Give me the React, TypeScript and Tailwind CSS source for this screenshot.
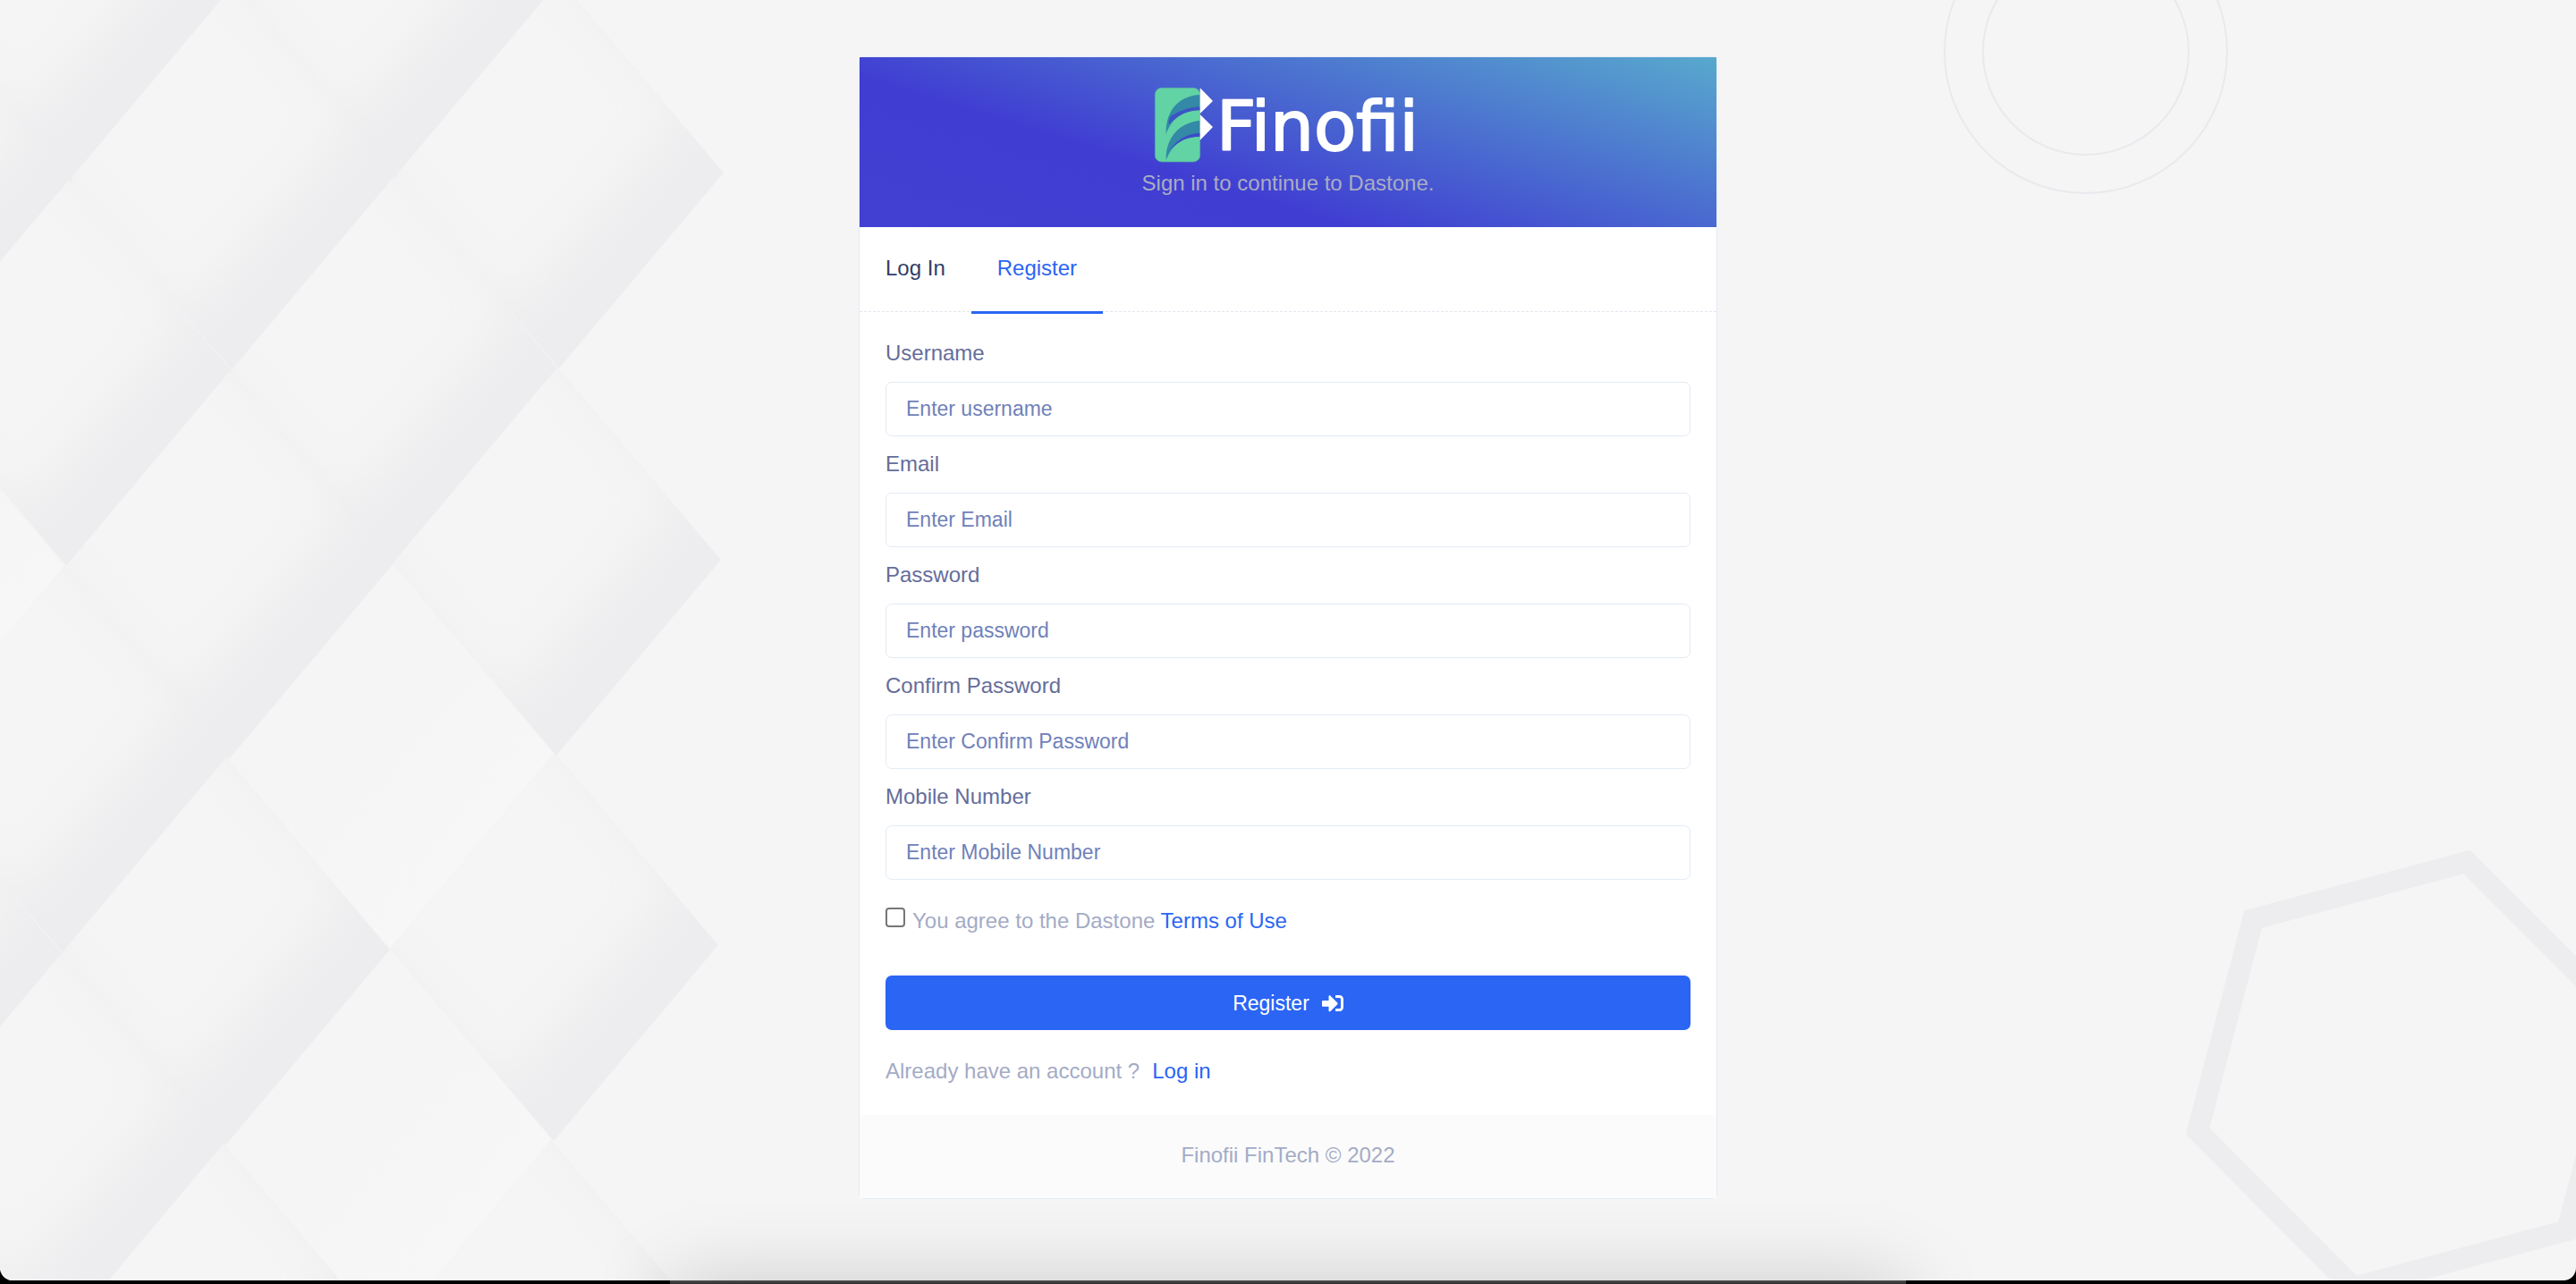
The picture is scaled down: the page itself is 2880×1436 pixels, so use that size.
import React from "react";
import { FaSignInAlt } from "react-icons/fa";

const fields = [
  { id: "username", label: "Username", type: "text", placeholder: "Enter username" },
  { id: "email", label: "Email", type: "email", placeholder: "Enter Email" },
  { id: "password", label: "Password", type: "password", placeholder: "Enter password" },
  { id: "confirm", label: "Confirm Password", type: "password", placeholder: "Enter Confirm Password" },
  { id: "mobile", label: "Mobile Number", type: "tel", placeholder: "Enter Mobile Number" },
];

// Right-hand corner of every shaded tile, in backdrop units.
const shadedTiles: [number, number][] = [
  [627, -21],
  [263, -19],
  [808, 193],
  [444, 197],
  [80, 201],
  [623, 412],
  [259, 416],
  [805, 626],
  [439, 630],
  [254, 848],
  [802, 1057],
  [435, 1062],
  [69, 1067],
  [251, 1281],
  [798, 1490],
  [432, 1494],
];

const lightTiles: [number, number][] = [
  [73, 636],
  [620, 844],
  [617, 1275],
];

function Backdrop() {
  return (
    <svg
      aria-hidden="true"
      className="absolute inset-0 size-full"
      viewBox="0 0 2880 1432"
      preserveAspectRatio="xMidYMid slice"
    >
      <defs>
        <clipPath id="tile">
          <path d="M1 0 L-183 219 L-366 4 L-182 -215 Z" />
        </clipPath>
        <filter id="soft" x="-50%" y="-50%" width="200%" height="200%">
          <feGaussianBlur stdDeviation="32" />
        </filter>
        <linearGradient id="sheen" x1="0" y1="0" x2="1" y2="1">
          <stop offset="0.4" stopColor="#f5f5f5" />
          <stop offset="0.75" stopColor="#f7f7f7" />
        </linearGradient>
      </defs>
      {lightTiles.map(([x, y]) => (
        <path
          key={`${x}-${y}`}
          transform={`translate(${x} ${y})`}
          d="M0 0 L-183 218 L-365 4 L-182 -214 Z"
          fill="url(#sheen)"
        />
      ))}
      {shadedTiles.map(([x, y]) => (
        <g key={`${x}-${y}`} transform={`translate(${x} ${y})`}>
          <g clipPath="url(#tile)">
            <path d="M4 0 L-183 222 L-369 4 L-182 -218 Z" fill="#ededef" />
            <path d="M-44 -68 L-243 164 L-543 -189 L-344 -421 Z" fill="#f5f5f5" filter="url(#soft)" />
          </g>
        </g>
      ))}
      <g fill="none" stroke="#e9e9ee" strokeWidth="2">
        <circle cx="2332" cy="58" r="115" />
        <circle cx="2332" cy="58" r="158" />
      </g>
      <path
        d="M2758 964 L2519 1028 L2457 1265 L2631 1440 L2870 1376 L2933 1139 Z"
        fill="none"
        stroke="#ededef"
        strokeWidth="24"
      />
    </svg>
  );
}

function Logo() {
  return (
    <svg role="img" aria-label="Finofii" className="h-[84px] w-[298px] overflow-visible" viewBox="0 0 298 84">
      <g transform="scale(0.3333)">
        <rect x="1" y="1" width="151" height="248" rx="22" fill="#62d3a5" stroke="#57a99f" strokeWidth="2" />
        <path d="M152 24 C92 26 36 66 38 156 C56 106 92 76 152 76 Z" fill="#3489a6" />
        <path d="M152 64 C112 66 84 78 54 96 C48 104 46 114 48 124 C76 92 112 76 152 76 Z" fill="#3b55c4" />
        <path d="M152 111 C98 114 36 154 38 244 C56 194 92 164 152 164 Z" fill="#3489a6" />
        <path d="M152 152 C112 154 76 172 52 208 C80 178 112 164 152 164 Z" fill="#3b4bc8" />
        <path d="M152 1 L195 45 L152 87 Z M152 90 L195 132 L152 176 Z" fill="#fff" />
      </g>
      <text
        x="69"
        y="70"
        fill="#fff"
        stroke="#fff"
        strokeWidth="2"
        strokeLinejoin="round"
        className="font-['DejaVu_Sans',sans-serif] text-[77px]"
      >
        Finofii
      </text>
    </svg>
  );
}

export default function App() {
  return (
    <div className="flex min-h-screen flex-col bg-black font-['Liberation_Sans',Arial,sans-serif] text-[24px] leading-[34px] text-[#a4abc5]">
      <main className="relative isolate flex flex-1 flex-col overflow-hidden rounded-b-[14px] bg-[#f5f5f5] px-4 pt-[63px] pb-[90px]">
        <Backdrop />
        <div
          aria-hidden="true"
          className="absolute inset-x-[26%] top-full h-40 shadow-[0_0_90px_rgba(0,0,0,0.17)]"
        />
        <div className="relative mx-auto w-full max-w-[960px] rounded-md border border-[#e3ebf6] bg-white">
          <header className="flex h-[190px] flex-col items-center bg-[linear-gradient(17deg,#4140d2_0%,#403ed2_35%,#58a9cd_100%)] pt-[34px]">
            <Logo />
            <p className="mt-[6px] text-[#a9adc4]">Sign in to continue to Dastone.</p>
          </header>

          <nav role="tablist" className="flex h-[95px] border-b border-dashed border-[#e3e6f0]">
            <button type="button" role="tab" aria-selected="false" className="px-[29px] pb-[3px] text-[#303e67]">
              Log In
            </button>
            <button
              type="button"
              role="tab"
              aria-selected="true"
              className="-mb-[3px] border-b-[3px] border-[#2a65f4] px-[29px] pb-[3px] text-[#2a65f4]"
            >
              Register
            </button>
          </nav>

          <form className="px-[29px] pt-[29px] pb-[32px]" onSubmit={(e) => e.preventDefault()}>
            {fields.map((f) => (
              <div key={f.id} className="mb-[14px]">
                <label htmlFor={f.id} className="mb-[15px] block text-[#656d9a]">
                  {f.label}
                </label>
                <input
                  id={f.id}
                  type={f.type}
                  placeholder={f.placeholder}
                  className="block h-[61px] w-full rounded-[7px] border border-[#e3ebf6] bg-white px-[22px] text-[23px] text-[#303e67] placeholder:text-[#7081b9]"
                />
              </div>
            ))}

            <div className="mt-[29px] flex items-start gap-[8px]">
              <input
                id="terms"
                type="checkbox"
                className="mt-[2px] size-[22px] appearance-none rounded-[4px] border-2 border-[#767676] bg-white checked:bg-[#2a65f4]"
              />
              <span>
                <label htmlFor="terms">You agree to the Dastone </label>
                <a href="#terms" className="text-[#2a65f4]">
                  Terms of Use
                </a>
              </span>
            </div>

            <button
              type="submit"
              className="mt-[44px] flex h-[61px] w-full items-center justify-center gap-[14px] rounded-[7px] bg-[#2a65f4] text-[23px] text-white"
            >
              Register
              <FaSignInAlt className="size-[24px]" />
            </button>

            <p className="mt-[29px]">
              Already have an account ?
              <a href="#login" className="ml-[14px] text-[#2a65f4]">
                Log in
              </a>
            </p>
          </form>

          <footer className="flex h-[93px] items-center justify-center bg-[#fbfbfb] pb-[4px]">
            Finofii FinTech © 2022
          </footer>
        </div>
      </main>
      <div aria-hidden="true" className="flex h-[4px] justify-center bg-black">
        <div className="h-full w-[48%] bg-linear-to-b from-[#505050] to-[#303030]" />
      </div>
    </div>
  );
}
